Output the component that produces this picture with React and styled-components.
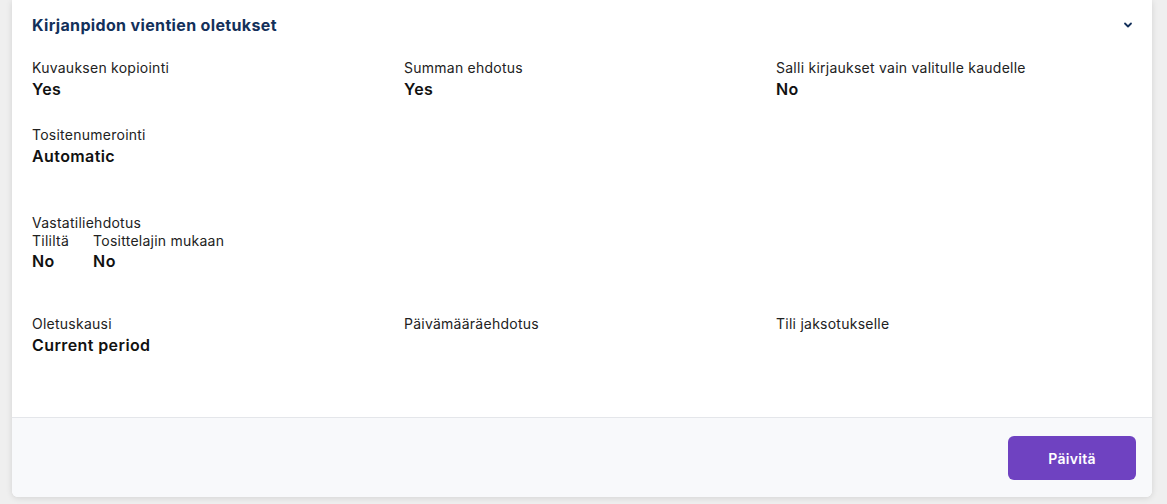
import React from "react";
import styled, { createGlobalStyle } from "styled-components";

const Global = createGlobalStyle`
  html, body { margin: 0; padding: 0; background: #efefef; }
  body { font-family: Inter, "Noto Sans", sans-serif; color: #1d1d1f; }
`;

const Page = styled.div`
  padding: 0 15px 8px 12px;
  width: 1167px;
  box-sizing: border-box;
`;

const Card = styled.section`
  background: #fff;
  border-radius: 0 0 6px 6px;
  box-shadow: 0 1px 6px rgba(0, 0, 0, 0.12);
  overflow: hidden;
`;

const Header = styled.header`
  display: flex;
  align-items: center;
  justify-content: space-between;
  height: 50px;
  padding: 0 19px 0 20px;
`;

const Title = styled.h2`
  margin: 0;
  font-size: 16px;
  font-weight: 700;
  color: #13305a;
  letter-spacing: 0.35px;
`;

const Body = styled.div`
  padding: 8px 20px 60px 20px;
`;

const Section = styled.div`
  display: grid;
  grid-template-columns: repeat(3, 372px);
  row-gap: 24px;
  margin-top: ${(p) => p.$mt || 0}px;
`;

const Field = styled.div`
  display: flex;
  flex-direction: column;
`;

const Label = styled.div`
  font-size: 14px;
  line-height: ${(p) => p.$lh || 20}px;
  color: #222;
  letter-spacing: 0.25px;
`;

const Value = styled.div`
  font-size: 16px;
  line-height: ${(p) => p.$lh || 23}px;
  font-weight: 600;
  color: #111;
  min-height: ${(p) => p.$lh || 23}px;
  letter-spacing: 0.4px;
`;

const SubRow = styled.div`
  display: flex;
  gap: 24px;
`;

const Footer = styled.footer`
  background: #f8f9fb;
  border-top: 1px solid #e4e6ea;
  display: flex;
  justify-content: flex-end;
  padding: 18px 16px 17px;
`;

const Button = styled.button`
  width: 128px;
  height: 44px;
  border: none;
  border-radius: 6px;
  background: #6f42c1;
  color: #fff;
  font-family: inherit;
  font-size: 14px;
  font-weight: 600;
  letter-spacing: 0.3px;
  cursor: pointer;
`;

const Chevron = () => (
  <svg width="10" height="8" viewBox="0 0 10 8" fill="none">
    <path d="M2 2.5 L5 5.5 L8 2.5" stroke="#13305a" strokeWidth="1.8" strokeLinecap="round" strokeLinejoin="round" />
  </svg>
);

function F({ label, value }) {
  return (
    <Field>
      <Label>{label}</Label>
      <Value>{value}</Value>
    </Field>
  );
}

export default function App() {
  return (
    <>
      <Global />
      <Page>
        <Card>
          <Header>
            <Title>Kirjanpidon vientien oletukset</Title>
            <Chevron />
          </Header>
          <Body>
            <Section>
              <F label="Kuvauksen kopiointi" value="Yes" />
              <F label="Summan ehdotus" value="Yes" />
              <F label="Salli kirjaukset vain valitulle kaudelle" value="No" />
              <F label="Tositenumerointi" value="Automatic" />
            </Section>
            <Section $mt={46}>
              <Field>
                <Label $lh={18}>Vastatiliehdotus</Label>
                <SubRow>
                  <Field>
                    <Label $lh={17}>Tililtä</Label>
                    <Value $lh={25}>No</Value>
                  </Field>
                  <Field>
                    <Label $lh={17}>Tosittelajin mukaan</Label>
                    <Value $lh={25}>No</Value>
                  </Field>
                </SubRow>
              </Field>
            </Section>
            <Section $mt={40}>
              <F label="Oletuskausi" value="Current period" />
              <F label="Päivämääräehdotus" value="" />
              <F label="Tili jaksotukselle" value="" />
            </Section>
          </Body>
          <Footer>
            <Button>Päivitä</Button>
          </Footer>
        </Card>
      </Page>
    </>
  );
}
